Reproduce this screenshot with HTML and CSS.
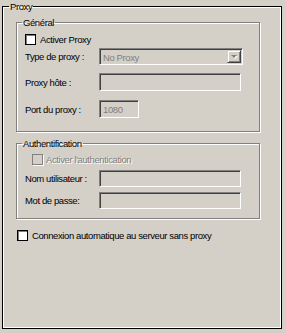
FILE: index.html
```html
<!DOCTYPE html>
<html>
<head>
    <title>Proxy</title>
    <link rel="stylesheet" href="styles.css">
</head>
<body>
    <fieldset class="frame">
        <legend>Proxy</legend>

        <!-- General settings -->
        <fieldset class="group group-general">
            <legend>Général</legend>
            <div class="check-row row-proxy">
                <span class="check"></span>
                <span>Activer Proxy</span>
            </div>
            <div class="row row-type">
                <span class="label">Type de proxy :</span>
                <div class="field select">
                    <span class="select-value">No Proxy</span>
                    <span class="select-button"><span class="arrow"></span></span>
                </div>
            </div>
            <div class="row row-host">
                <span class="label">Proxy hôte :</span>
                <div class="field wide"></div>
            </div>
            <div class="row row-port">
                <span class="label">Port du proxy :</span>
                <div class="field port"><span class="field-value">1080</span></div>
            </div>
        </fieldset>

        <!-- Authentication -->
        <fieldset class="group group-auth">
            <legend>Authentification</legend>
            <div class="check-row row-auth disabled">
                <span class="check"></span>
                <span>Activer l'authentication</span>
            </div>
            <div class="row row-user">
                <span class="label">Nom utilisateur :</span>
                <div class="field wide"></div>
            </div>
            <div class="row row-pass">
                <span class="label">Mot de passe:</span>
                <div class="field wide"></div>
            </div>
        </fieldset>

        <div class="check-row row-auto">
            <span class="check"></span>
            <span>Connexion automatique au serveur sans proxy</span>
        </div>
    </fieldset>
</body>
</html>
```

FILE: styles.css
```css
/* Classic dialog look */
html, body {
    height: 100%;
}

body {
    margin: 0;
    background-color: #d4d0c8;
    font-family: "Liberation Sans", Arial, sans-serif;
    font-size: 9.5px;
    letter-spacing: -0.4px;
    color: #000000;
}

legend {
    padding: 0 1px;
    line-height: 13px;
}

/* Outer frame */
.frame {
    box-sizing: border-box;
    height: calc(100% - 4px);
    margin: 0 4px 0 2px;
    padding: 0 0 0 6px;
    min-inline-size: 0;
    border: 1px solid #000000;
    box-shadow: inset 1px 1px 0 #ffffff, inset -1px -1px 0 #ffffff;
}

/* Etched group boxes */
.group {
    box-sizing: border-box;
    width: 244px;
    margin: 0 0 0 7px;
    padding: 0 0 0 5px;
    min-inline-size: 0;
    border: 1px solid #808080;
    box-shadow: inset 1px 1px 0 #ffffff, 1px 1px 0 #ffffff;
}

.group-general {
    margin-top: 3px;
    padding-bottom: 13px;
}

.group-auth {
    margin-top: 5px;
    padding-bottom: 9px;
}

/* Rows */
.row {
    display: flex;
    align-items: center;
    padding-left: 3px;
}

.label {
    width: 74px;
    flex-shrink: 0;
}

.row-type { height: 17px; margin-top: 2px; }
.row-host { height: 18px; margin-top: 8px; }
.row-port { height: 18px; margin-top: 9px; }
.row-user { height: 17px; margin-top: 4px; }
.row-pass { height: 17px; margin-top: 5px; }

/* Sunken fields */
.field {
    box-sizing: border-box;
    height: 100%;
    border: 1px solid;
    border-color: #808080 #ffffff #ffffff #808080;
    box-shadow: inset 1px 1px 0 #404040, inset -1px -1px 0 #d4d0c8;
    background-color: #d4d0c8;
    color: #808080;
}

.wide {
    width: 142px;
}

.port {
    width: 40px;
}

.field-value {
    display: block;
    padding: 3px 0 0 3px;
}

.select {
    width: 144px;
    display: flex;
    padding: 1px;
}

.select-value {
    flex: 1;
    padding: 2px 0 0 2px;
}

.select-button {
    box-sizing: border-box;
    width: 14px;
    height: 100%;
    display: flex;
    align-items: center;
    justify-content: center;
    border: 1px solid;
    border-color: #d4d0c8 #404040 #404040 #d4d0c8;
    box-shadow: inset 1px 1px 0 #ffffff, inset -1px -1px 0 #808080;
}

.arrow {
    width: 0;
    height: 0;
    border-top: 3px solid #808080;
    border-left: 3px solid transparent;
    border-right: 3px solid transparent;
    filter: drop-shadow(1px 1px 0 #ffffff);
}

/* Checkboxes */
.check-row {
    display: flex;
    align-items: center;
    height: 13px;
}

.check {
    box-sizing: border-box;
    width: 11px;
    height: 11px;
    margin-right: 4px;
    border: 1px solid #000000;
    box-shadow: inset 1px 1px 0 #808080;
    background-color: #ffffff;
}

.row-proxy {
    margin-top: 4px;
    padding-left: 3px;
}

.row-auth {
    margin-top: 3px;
    padding-left: 10px;
}

.row-auto {
    margin: 10px 0 0 8px;
}

.disabled {
    color: #808080;
    text-shadow: 1px 1px 0 #ffffff;
}

.disabled .check {
    margin-right: 3px;
    border-color: #808080;
    box-shadow: 1px 1px 0 #ffffff;
    background-color: #d4d0c8;
}
```
